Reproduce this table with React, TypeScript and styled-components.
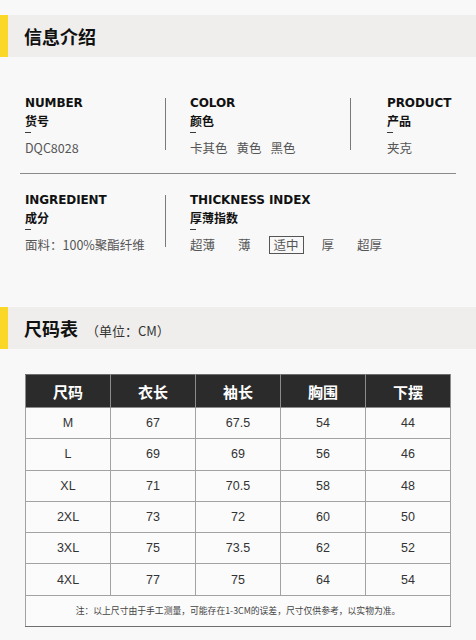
import React from "react";
import styled, { createGlobalStyle } from "styled-components";

const GlobalStyle = createGlobalStyle`
  html, body {
    margin: 0;
    padding: 0;
    background: #f8f8f8;
  }
  body {
    font-family: "Noto Sans CJK SC", "Noto Sans", sans-serif;
    color: #222;
  }
  * { box-sizing: border-box; }
`;

const Page = styled.div`
  width: 476px;
  height: 640px;
  overflow: hidden;
  background: #f8f8f8;
  padding-top: 15px;
`;

const SectionHeader = styled.div<{ $mt?: number }>`
  display: flex;
  align-items: center;
  height: 42px;
  margin-top: ${(p) => p.$mt ?? 0}px;
  background: #efeeec;
`;

const Accent = styled.div`
  width: 8px;
  align-self: stretch;
  background: #fbd828;
`;

const Title = styled.h2`
  margin: 0 0 0 16px;
  font-family: "Noto Sans CJK SC", sans-serif;
  font-size: 18px;
  font-weight: 700;
  color: #111;
  line-height: 1;
`;

const Unit = styled.span`
  margin-left: 8px;
  font-size: 13px;
  font-weight: 400;
  color: #333;
`;

const InfoBlock = styled.div`
  padding-left: 25px;
  margin-top: 37px;
`;

const InfoRow = styled.div`
  display: flex;
  align-items: flex-start;
`;

const Cell = styled.div<{ $w?: number; $pl?: number }>`
  display: flex;
  flex-direction: column;
  align-items: flex-start;
  padding-left: ${(p) => p.$pl ?? 0}px;
  ${(p) => (p.$w ? `width: ${p.$w}px;` : "flex: 1;")}
`;

const Divider = styled.div`
  width: 1px;
  height: 52px;
  margin-top: 4px;
  background: #7a7a7a;
`;

const EnLabel = styled.div`
  font-family: "DejaVu Sans", sans-serif;
  font-weight: 700;
  font-size: 12px;
  line-height: 18px;
  color: #111;
  letter-spacing: -0.1px;
`;

const CnLabel = styled.div`
  font-family: "Noto Sans CJK SC", sans-serif;
  font-weight: 700;
  font-size: 12px;
  line-height: 17px;
  color: #111;
`;

const Dash = styled.div`
  width: 6px;
  height: 1px;
  margin: 3px 0 6px;
  background: #3a3a3a;
`;

const Value = styled.div`
  font-size: 12.5px;
  line-height: 18px;
  color: #555;
  display: flex;
  gap: 9px;
`;

const Options = styled.div`
  display: flex;
  align-items: center;
  gap: 23px;
  height: 18px;
`;

const Option = styled.span<{ $active?: boolean }>`
  font-size: 12.5px;
  line-height: 16px;
  color: #555;
  ${(p) =>
    p.$active
      ? `border: 1px solid #555; padding: 0 4px; margin: 0 -5px;`
      : ``}
`;

const HLine = styled.div`
  margin: 16px 0 17px -5px;
  width: 436px;
  height: 1px;
  background: #8a8a8a;
`;

const TableWrap = styled.div`
  padding-left: 25px;
  margin-top: 25px;
`;

const SizeTable = styled.table`
  width: 426px;
  border-collapse: collapse;
  table-layout: fixed;
  border: 1px solid #6e6e6e;
`;

const HeadCell = styled.th`
  height: 33px;
  padding: 0;
  background: #2b2b2b;
  color: #fff;
  font-family: "Noto Sans CJK SC", sans-serif;
  font-size: 15px;
  font-weight: 700;
  text-align: center;
  border: 1px solid #8c8c8c;
  border-top-color: #6e6e6e;
`;

const BodyRow = styled.tr``;

const BodyCell = styled.td`
  height: 31.3px;
  padding: 0;
  background: #fbfbfb;
  color: #333;
  font-family: "Liberation Sans", Arial, sans-serif;
  font-size: 12.5px;
  text-align: center;
  border: 1px solid #a2a2a2;
`;

const NoteCell = styled.td`
  height: 31px;
  padding: 0;
  background: #fbfbfb;
  color: #444;
  font-family: "Noto Sans CJK SC", sans-serif;
  font-size: 8.8px;
  text-align: center;
  border: 1px solid #a2a2a2;
  border-bottom-color: #6e6e6e;
`;

const headers = ["尺码", "衣长", "袖长", "胸围", "下摆"];
const rows: (string | number)[][] = [
  ["M", 67, 67.5, 54, 44],
  ["L", 69, 69, 56, 46],
  ["XL", 71, 70.5, 58, 48],
  ["2XL", 73, 72, 60, 50],
  ["3XL", 75, 73.5, 62, 52],
  ["4XL", 77, 75, 64, 54],
];

const thickness = ["超薄", "薄", "适中", "厚", "超厚"];

export default function App() {
  return (
    <>
      <GlobalStyle />
      <Page>
        <SectionHeader>
          <Accent />
          <Title>信息介绍</Title>
        </SectionHeader>

        <InfoBlock>
          <InfoRow>
            <Cell $w={140}>
              <EnLabel>NUMBER</EnLabel>
              <CnLabel>货号</CnLabel>
              <Dash />
              <Value>DQC8028</Value>
            </Cell>
            <Divider />
            <Cell $w={184} $pl={24}>
              <EnLabel>COLOR</EnLabel>
              <CnLabel>颜色</CnLabel>
              <Dash />
              <Value>
                <span>卡其色</span>
                <span>黄色</span>
                <span>黑色</span>
              </Value>
            </Cell>
            <Divider />
            <Cell $pl={36}>
              <EnLabel>PRODUCT</EnLabel>
              <CnLabel>产品</CnLabel>
              <Dash />
              <Value>夹克</Value>
            </Cell>
          </InfoRow>
          <HLine />
          <InfoRow>
            <Cell $w={140}>
              <EnLabel>INGREDIENT</EnLabel>
              <CnLabel>成分</CnLabel>
              <Dash />
              <Value>面料：100%聚酯纤维</Value>
            </Cell>
            <Divider />
            <Cell $pl={24}>
              <EnLabel>THICKNESS INDEX</EnLabel>
              <CnLabel>厚薄指数</CnLabel>
              <Dash />
              <Options>
                {thickness.map((t) => (
                  <Option key={t} $active={t === "适中"}>
                    {t}
                  </Option>
                ))}
              </Options>
            </Cell>
          </InfoRow>
        </InfoBlock>

        <SectionHeader $mt={53}>
          <Accent />
          <Title>
            尺码表<Unit>（单位：CM）</Unit>
          </Title>
        </SectionHeader>

        <TableWrap>
          <SizeTable>
            <thead>
              <tr>
                {headers.map((h) => (
                  <HeadCell key={h}>{h}</HeadCell>
                ))}
              </tr>
            </thead>
            <tbody>
              {rows.map((r) => (
                <BodyRow key={String(r[0])}>
                  {r.map((c, i) => (
                    <BodyCell key={i}>{c}</BodyCell>
                  ))}
                </BodyRow>
              ))}
              <tr>
                <NoteCell colSpan={5}>
                  注：以上尺寸由于手工测量，可能存在1-3CM的误差，尺寸仅供参考，以实物为准。
                </NoteCell>
              </tr>
            </tbody>
          </SizeTable>
        </TableWrap>
      </Page>
    </>
  );
}
